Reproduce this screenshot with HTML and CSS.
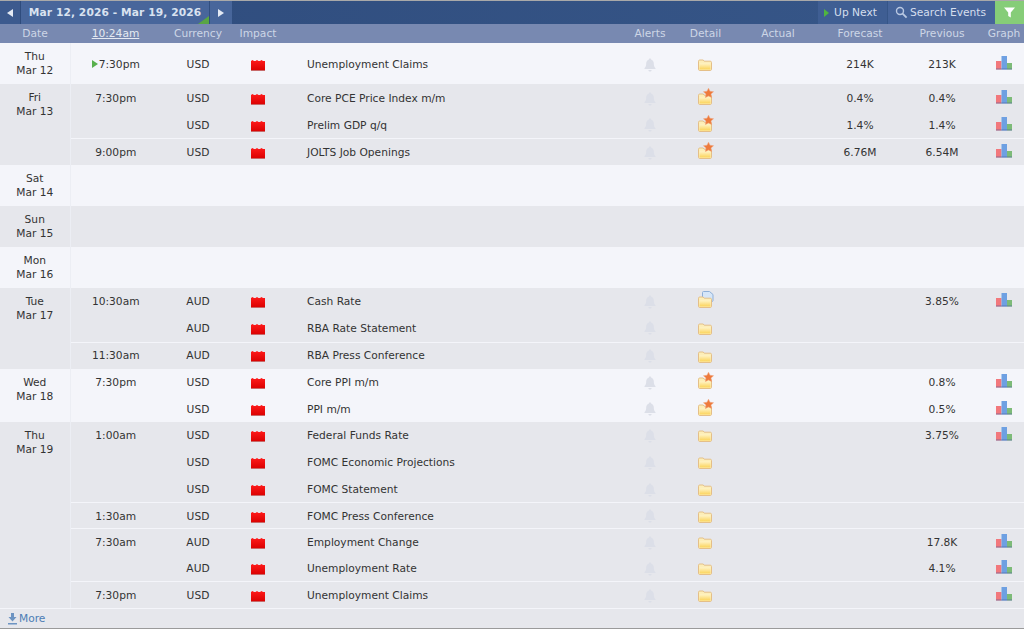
FILE: index.html
```html
<!DOCTYPE html>
<html lang="en">
<head>
    <meta charset="UTF-8">
    <title>Calendar</title>
    <link rel="stylesheet" href="styles.css">
</head>
<body>
    <svg class="defs" width="0" height="0">
        <defs>
            <linearGradient id="red" x1="0" y1="0" x2="0" y2="1"><stop offset="0" stop-color="#ff1a1a"/><stop offset="1" stop-color="#d80000"/></linearGradient>
            <linearGradient id="yellow" x1="0" y1="0" x2="0" y2="1"><stop offset="0" stop-color="#fff3c4"/><stop offset="1" stop-color="#fbd35a"/></linearGradient>
        </defs>
        <symbol id="bell" viewBox="0 0 12 14">
            <path d="M6 0.5c.8 0 1.2.5 1.3 1.2C9 2.3 9.800 3.800 9.800 5.600c0 2.200.5 3.500 1.700 4.600v.8H.5v-.8c1.200-1.100 1.700-2.400 1.700-4.600 0-1.800.8-3.300 2.500-3.900C4.800 1 5.200.5 6 .5z" fill="#dcdfe8"/>
            <path d="M4.300 12h3.400c-.2 1-.9 1.500-1.700 1.500s-1.500-.5-1.700-1.500z" fill="#dcdfe8"/>
        </symbol>
        <symbol id="folder" viewBox="0 0 14 12">
            <path d="M.5 2.200C.5 1.500 1 1 1.700 1h3.500l1 1.200h6.100c.7 0 1.200.5 1.200 1.200v6.900c0 .7-.5 1.200-1.200 1.200H1.700c-.7 0-1.200-.5-1.200-1.200z" fill="#fdeeb8" stroke="#e4bf88"/>
            <path d="M1.500 4.500h11v6h-11z" fill="url(#yellow)"/>
        </symbol>
        <symbol id="star" viewBox="0 0 12 11">
            <path d="M6 .3l1.600 3.300 3.900.5-2.800 2.600.7 3.800L6 8.700l-3.400 1.800.7-3.800L.5 4.100l3.900-.5z" fill="#ee7a3c" stroke="#eea27a" stroke-width=".6"/>
        </symbol>
        <symbol id="doc" viewBox="0 0 12 11">
            <path d="M.5 1.500c0-.6.4-1 1-1h6l3.500 3v6c0 .6-.4 1-1 1h-8.500c-.6 0-1-.4-1-1z" fill="#d6e6f8" stroke="#8fb0d8"/>
        </symbol>
        <symbol id="graph" viewBox="0 0 16 14">
            <path d="M0 5h5.500v8.500H0z" fill="#f2787c"/>
            <path d="M5.500 0h5.500v13.500H5.500z" fill="#6ea0e2"/>
            <path d="M11 7h5v6.500h-5z" fill="#7dbb78"/>
            <path d="M0 12.500h16v1H0z" fill="#4a5f9e" opacity=".6"/>
        </symbol>
        <symbol id="impact" viewBox="0 0 14 12">
            <path d="M0 2l1.500-1 1.500 1h1.500L6 1l1.500 1H9l1.500-1L12 2h2v10H0z" fill="url(#red)"/>
            <path d="M0 11h14v1H0z" fill="#c86a6a"/>
        </symbol>
    </svg>

    <div class="topbar">
        <div class="nav-left">
            <a class="tb-btn arrow"><span class="tri tri-left"></span></a>
            <a class="tb-btn range">Mar 12, 2026 - Mar 19, 2026<span class="corner"></span></a>
            <a class="tb-btn arrow next"><span class="tri tri-right"></span></a>
        </div>
        <div class="nav-right">
            <a class="tb-btn upnext"><span class="tri tri-green"></span>Up Next</a>
            <a class="tb-btn search">
                <svg width="13" height="13" viewBox="0 0 13 13"><circle cx="5" cy="5" r="3.500" fill="none" stroke="#b9c8e2" stroke-width="1.400"/><path d="M7.600 7.600l4 4" stroke="#b9c8e2" stroke-width="1.800"/></svg>
                Search Events
            </a>
            <a class="tb-btn filter">
                <svg width="11" height="11" viewBox="0 0 11 11"><path d="M0 .5h11L6.800 5.500v5L4.200 9V5.500z" fill="#fff"/></svg>
            </a>
        </div>
    </div>

    <table class="calendar">
        <colgroup>
            <col class="c-date"><col class="c-time"><col class="c-cur"><col class="c-impact"><col class="c-event">
            <col class="c-alert"><col class="c-detail"><col class="c-actual"><col class="c-fore"><col class="c-prev"><col class="c-graph">
        </colgroup>
        <thead>
            <tr>
                <th>Date</th><th><u>10:24am</u></th><th>Currency</th><th>Impact</th><th></th>
                <th>Alerts</th><th>Detail</th><th>Actual</th><th>Forecast</th><th>Previous</th><th>Graph</th>
            </tr>
        </thead>

        <tbody class="day low">
            <tr class="tall">
                <td class="date">Thu<br>Mar 12</td>
                <td class="time"><span class="tri tri-now"></span>7:30pm</td><td>USD</td>
                <td><svg class="ic-impact"><use href="#impact"/></svg></td>
                <td class="event">Unemployment Claims</td>
                <td><svg class="ic-bell"><use href="#bell"/></svg></td>
                <td><span class="detail"><svg class="ic-folder"><use href="#folder"/></svg></span></td>
                <td></td><td>214K</td><td>213K</td>
                <td><svg class="ic-graph"><use href="#graph"/></svg></td>
            </tr>
        </tbody>

        <tbody class="day alt low">
            <tr class="first">
                <td class="date" rowspan="3">Fri<br>Mar 13</td>
                <td class="time">7:30pm</td><td>USD</td>
                <td><svg class="ic-impact"><use href="#impact"/></svg></td>
                <td class="event">Core PCE Price Index m/m</td>
                <td><svg class="ic-bell"><use href="#bell"/></svg></td>
                <td><span class="detail"><svg class="ic-folder"><use href="#folder"/></svg><svg class="ic-star"><use href="#star"/></svg></span></td>
                <td></td><td>0.4%</td><td>0.4%</td>
                <td><svg class="ic-graph"><use href="#graph"/></svg></td>
            </tr>
            <tr>
                <td class="time"></td><td>USD</td>
                <td><svg class="ic-impact"><use href="#impact"/></svg></td>
                <td class="event">Prelim GDP q/q</td>
                <td><svg class="ic-bell"><use href="#bell"/></svg></td>
                <td><span class="detail"><svg class="ic-folder"><use href="#folder"/></svg><svg class="ic-star"><use href="#star"/></svg></span></td>
                <td></td><td>1.4%</td><td>1.4%</td>
                <td><svg class="ic-graph"><use href="#graph"/></svg></td>
            </tr>
            <tr class="sep">
                <td class="time">9:00pm</td><td>USD</td>
                <td><svg class="ic-impact"><use href="#impact"/></svg></td>
                <td class="event">JOLTS Job Openings</td>
                <td><svg class="ic-bell"><use href="#bell"/></svg></td>
                <td><span class="detail"><svg class="ic-folder"><use href="#folder"/></svg><svg class="ic-star"><use href="#star"/></svg></span></td>
                <td></td><td>6.76M</td><td>6.54M</td>
                <td><svg class="ic-graph"><use href="#graph"/></svg></td>
            </tr>
        </tbody>

        <tbody class="day">
            <tr class="tall"><td class="date">Sat<br>Mar 14</td><td colspan="10"></td></tr>
        </tbody>
        <tbody class="day alt">
            <tr class="tall"><td class="date">Sun<br>Mar 15</td><td colspan="10"></td></tr>
        </tbody>
        <tbody class="day">
            <tr class="tall"><td class="date">Mon<br>Mar 16</td><td colspan="10"></td></tr>
        </tbody>

        <tbody class="day alt">
            <tr class="first">
                <td class="date" rowspan="3">Tue<br>Mar 17</td>
                <td class="time">10:30am</td><td>AUD</td>
                <td><svg class="ic-impact"><use href="#impact"/></svg></td>
                <td class="event">Cash Rate</td>
                <td><svg class="ic-bell"><use href="#bell"/></svg></td>
                <td><span class="detail"><svg class="ic-doc"><use href="#doc"/></svg><svg class="ic-folder"><use href="#folder"/></svg></span></td>
                <td></td><td></td><td>3.85%</td>
                <td><svg class="ic-graph"><use href="#graph"/></svg></td>
            </tr>
            <tr>
                <td class="time"></td><td>AUD</td>
                <td><svg class="ic-impact"><use href="#impact"/></svg></td>
                <td class="event">RBA Rate Statement</td>
                <td><svg class="ic-bell"><use href="#bell"/></svg></td>
                <td><span class="detail"><svg class="ic-folder"><use href="#folder"/></svg></span></td>
                <td></td><td></td><td></td><td></td>
            </tr>
            <tr class="sep">
                <td class="time">11:30am</td><td>AUD</td>
                <td><svg class="ic-impact"><use href="#impact"/></svg></td>
                <td class="event">RBA Press Conference</td>
                <td><svg class="ic-bell"><use href="#bell"/></svg></td>
                <td><span class="detail"><svg class="ic-folder"><use href="#folder"/></svg></span></td>
                <td></td><td></td><td></td><td></td>
            </tr>
        </tbody>

        <tbody class="day">
            <tr class="first">
                <td class="date" rowspan="2">Wed<br>Mar 18</td>
                <td class="time">7:30pm</td><td>USD</td>
                <td><svg class="ic-impact"><use href="#impact"/></svg></td>
                <td class="event">Core PPI m/m</td>
                <td><svg class="ic-bell"><use href="#bell"/></svg></td>
                <td><span class="detail"><svg class="ic-folder"><use href="#folder"/></svg><svg class="ic-star"><use href="#star"/></svg></span></td>
                <td></td><td></td><td>0.8%</td>
                <td><svg class="ic-graph"><use href="#graph"/></svg></td>
            </tr>
            <tr class="short">
                <td class="time"></td><td>USD</td>
                <td><svg class="ic-impact"><use href="#impact"/></svg></td>
                <td class="event">PPI m/m</td>
                <td><svg class="ic-bell"><use href="#bell"/></svg></td>
                <td><span class="detail"><svg class="ic-folder"><use href="#folder"/></svg><svg class="ic-star"><use href="#star"/></svg></span></td>
                <td></td><td></td><td>0.5%</td>
                <td><svg class="ic-graph"><use href="#graph"/></svg></td>
            </tr>
        </tbody>

        <tbody class="day alt">
            <tr class="first">
                <td class="date" rowspan="7">Thu<br>Mar 19</td>
                <td class="time">1:00am</td><td>USD</td>
                <td><svg class="ic-impact"><use href="#impact"/></svg></td>
                <td class="event">Federal Funds Rate</td>
                <td><svg class="ic-bell"><use href="#bell"/></svg></td>
                <td><span class="detail"><svg class="ic-folder"><use href="#folder"/></svg></span></td>
                <td></td><td></td><td>3.75%</td>
                <td><svg class="ic-graph"><use href="#graph"/></svg></td>
            </tr>
            <tr>
                <td class="time"></td><td>USD</td>
                <td><svg class="ic-impact"><use href="#impact"/></svg></td>
                <td class="event">FOMC Economic Projections</td>
                <td><svg class="ic-bell"><use href="#bell"/></svg></td>
                <td><span class="detail"><svg class="ic-folder"><use href="#folder"/></svg></span></td>
                <td></td><td></td><td></td><td></td>
            </tr>
            <tr class="short low">
                <td class="time"></td><td>USD</td>
                <td><svg class="ic-impact"><use href="#impact"/></svg></td>
                <td class="event">FOMC Statement</td>
                <td><svg class="ic-bell"><use href="#bell"/></svg></td>
                <td><span class="detail"><svg class="ic-folder"><use href="#folder"/></svg></span></td>
                <td></td><td></td><td></td><td></td>
            </tr>
            <tr class="sep short low">
                <td class="time">1:30am</td><td>USD</td>
                <td><svg class="ic-impact"><use href="#impact"/></svg></td>
                <td class="event">FOMC Press Conference</td>
                <td><svg class="ic-bell"><use href="#bell"/></svg></td>
                <td><span class="detail"><svg class="ic-folder"><use href="#folder"/></svg></span></td>
                <td></td><td></td><td></td><td></td>
            </tr>
            <tr class="sep low">
                <td class="time">7:30am</td><td>AUD</td>
                <td><svg class="ic-impact"><use href="#impact"/></svg></td>
                <td class="event">Employment Change</td>
                <td><svg class="ic-bell"><use href="#bell"/></svg></td>
                <td><span class="detail"><svg class="ic-folder"><use href="#folder"/></svg></span></td>
                <td></td><td></td><td>17.8K</td>
                <td><svg class="ic-graph"><use href="#graph"/></svg></td>
            </tr>
            <tr class="short low">
                <td class="time"></td><td>AUD</td>
                <td><svg class="ic-impact"><use href="#impact"/></svg></td>
                <td class="event">Unemployment Rate</td>
                <td><svg class="ic-bell"><use href="#bell"/></svg></td>
                <td><span class="detail"><svg class="ic-folder"><use href="#folder"/></svg></span></td>
                <td></td><td></td><td>4.1%</td>
                <td><svg class="ic-graph"><use href="#graph"/></svg></td>
            </tr>
            <tr class="sep low">
                <td class="time">7:30pm</td><td>USD</td>
                <td><svg class="ic-impact"><use href="#impact"/></svg></td>
                <td class="event">Unemployment Claims</td>
                <td><svg class="ic-bell"><use href="#bell"/></svg></td>
                <td><span class="detail"><svg class="ic-folder"><use href="#folder"/></svg></span></td>
                <td></td><td></td><td></td>
                <td><svg class="ic-graph"><use href="#graph"/></svg></td>
            </tr>
        </tbody>
    </table>

    <div class="more">
        <svg width="11" height="12" viewBox="0 0 11 12"><path d="M4 0h3v4h2.500L5.500 8.500 1.500 4H4zM1 10h9v1.500H1z" fill="#6d94c2"/></svg>
        More
    </div>
</body>
</html>
```

FILE: styles.css
```css
body {
    margin: 0;
    height: 629px;
    overflow: hidden;
    font-family: "DejaVu Sans", Verdana, sans-serif;
    font-size: 10.67px;
    color: #333;
    background: #e6e7ec;
}
.defs { display: block; height: 0; }

.topbar {
    display: flex;
    justify-content: space-between;
    height: 23px;
    border-top: 1px solid #a9a9a9;
    background: linear-gradient(to right, #2f4c7d, #375789);
}
.nav-left, .nav-right { display: flex; gap: 1px; }
.tb-btn {
    display: flex;
    align-items: center;
    justify-content: center;
    background: #48669b;
    color: #d5deee;
    position: relative;
}
.arrow { width: 20px; background: #3c5a8e; }
.next { width: 22px; background: #48669b; }
.range { width: 188px; font-weight: bold; letter-spacing: .1px; color: #d9e2f0; }
.corner {
    position: absolute;
    right: 0;
    bottom: 0;
    border-left: 11px solid transparent;
    border-bottom: 8px solid #59a544;
}
.upnext { width: 65px; gap: 5px; padding-right: 4px; background: #3f5e93; }
.search { width: 105px; gap: 2px; padding-right: 2px; background: #46649a; }
.filter { width: 29px; background: #86cd78; margin-left: -1px; }

.tri { display: block; width: 0; height: 0; border-style: solid; border-color: transparent; }
.tri-left { border-width: 4px 6px 4px 0; border-right-color: #e4eaf4; }
.tri-right { border-width: 4px 0 4px 6px; border-left-color: #e4eaf4; }
.tri-green { border-width: 4px 0 4px 5px; border-left-color: #4fb63f; }
.tri-now {
    display: inline-block;
    border-width: 4px 0 4px 6px;
    border-left-color: #58b04c;
    margin-right: 1px;
}

.calendar {
    width: 1024px;
    table-layout: fixed;
    border-collapse: collapse;
}
.c-date { width: 70px; }
.c-time { width: 91px; }
.c-cur { width: 74px; }
.c-impact { width: 46px; }
.c-event { width: 344px; }
.c-alert { width: 50px; }
.c-detail { width: 61px; }
.c-actual { width: 84px; }
.c-fore { width: 80px; }
.c-prev { width: 84px; }
.c-graph { width: 40px; }

.calendar th {
    height: 19px;
    padding: 0;
    background: #7889b1;
    color: #cdd6e6;
    font-weight: normal;
}
.calendar th u { color: #e4e9f2; }
.calendar td {
    height: 27px;
    padding: 0;
    text-align: center;
    vertical-align: middle;
    box-sizing: border-box;
}
.calendar td svg { display: inline-block; vertical-align: middle; }

.day { background: #f4f5fa; }
.day.alt { background: #e6e7ec; }
.tall td { height: 41px; }
.short td { height: 26px; }
.calendar .low td { padding-top: 2px; }
.calendar .low .detail { margin-top: 0; }

.calendar td.date {
    vertical-align: top;
    padding-top: 7px;
    line-height: 14px;
    border-right: 1px solid #eceef4;
}
.sep td:not(.date) { border-top: 1px solid #f4f5fa; }
.calendar td.event { text-align: left; padding-left: 26px; }

.ic-impact { width: 14px; height: 12px; }
.ic-bell { width: 12px; height: 14px; }
.ic-folder { width: 14px; height: 12px; }
.ic-graph { width: 16px; height: 14px; margin-bottom: 3px; }

.detail { display: inline-block; vertical-align: middle; position: relative; width: 14px; height: 12px; margin: 1px 0 0 -2px; }
.detail .ic-folder { position: absolute; left: 0; top: 0; }
.detail .ic-star { position: absolute; left: 5px; top: -5px; width: 11px; height: 10px; }
.detail .ic-doc { position: absolute; left: 4px; top: -5px; width: 12px; height: 11px; }

.more {
    display: flex;
    align-items: center;
    gap: 1px;
    height: 19px;
    padding-left: 7px;
    border-top: 1px solid #f4f5fa;
    border-bottom: 1px solid #9a9a9a;
    color: #4d7db5;
    background: #e6e7ec;
}
```
